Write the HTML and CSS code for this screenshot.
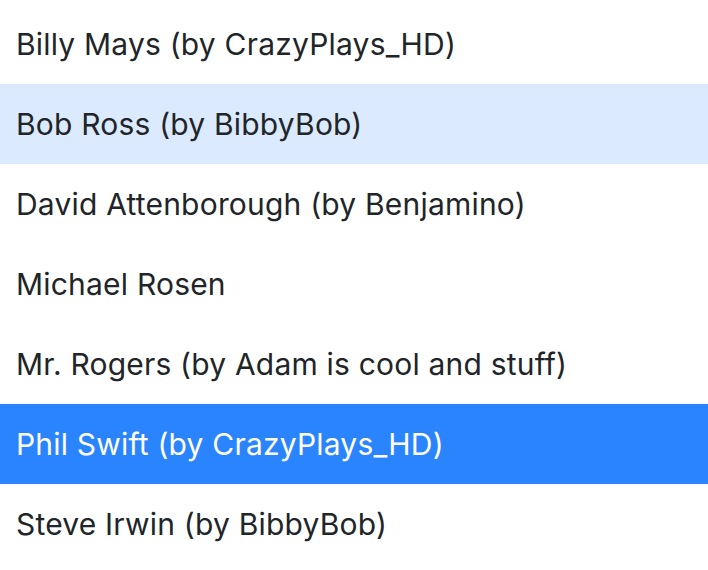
FILE: index.html
```html
<!DOCTYPE html>
<html>
<head>
<meta charset="utf-8">
<link rel="stylesheet" href="styles.css">
</head>
<body>
<ul class="list">
  <li class="item">Billy Mays (by CrazyPlays_HD)</li>
  <li class="item hover">Bob Ross (by BibbyBob)</li>
  <li class="item">David Attenborough (by Benjamino)</li>
  <li class="item">Michael Rosen</li>
  <li class="item">Mr. Rogers (by Adam is cool and stuff)</li>
  <li class="item selected">Phil Swift (by CrazyPlays_HD)</li>
  <li class="item">Steve Irwin (by BibbyBob)</li>
</ul>
</body>
</html>
```
FILE: styles.css
```css
html, body {
  margin: 0;
  padding: 0;
  background: #ffffff;
}
.list {
  list-style: none;
  margin: 0;
  padding: 4px 0 0 0;
  font-family: Inter, "Liberation Sans", sans-serif;
  font-size: 30px;
  letter-spacing: 0.2px;
  color: #212529;
}
.item {
  height: 80px;
  display: flex;
  align-items: center;
  padding-left: 16px;
  box-sizing: border-box;
}
.item.hover {
  background: #dbeafe;
}
.item.selected {
  background: #2a84fe;
  color: #ffffff;
}
```
